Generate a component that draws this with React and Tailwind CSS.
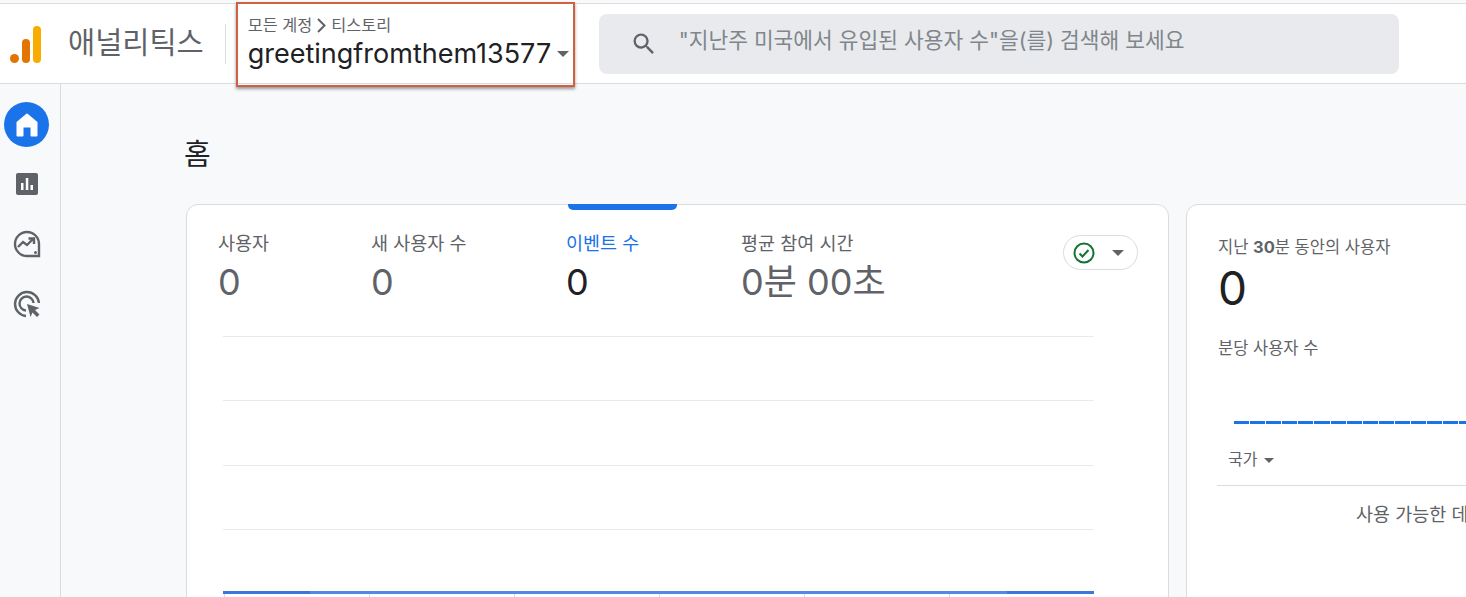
const kr = 'font-["Inter","Noto_Sans_CJK_KR",sans-serif]';

function Caret({ className = '', w = 10 }) {
  return (
    <svg width={w} height={w / 2} viewBox="0 0 10 5" className={className}>
      <path d="M0 0h10L5 5z" fill="#5f6368" />
    </svg>
  );
}

function Header() {
  return (
    <header className="h-[81px] shrink-0 flex items-center bg-white border-t border-b border-[#dadce0] mt-[3px] relative">
      <svg width="31" height="37" viewBox="0 0 31 37" className="ml-[10px] mt-[1px] shrink-0">
        <rect x="23" y="0" width="8" height="37" rx="4" fill="#f9ab00" />
        <rect x="12" y="13" width="8" height="24" rx="4" fill="#e37400" />
        <circle cx="4.500" cy="32.500" r="4.500" fill="#e37400" />
      </svg>
      <span className="ml-[27px] -mt-[2px] text-[29.500px] text-[#5f6368] leading-none">애널리틱스</span>
      <div className="ml-[21px] w-px h-[40px] bg-[#dadce0]" />
      <div className="ml-[22px] w-[330px] flex flex-col -mt-[1px]">
        <div className="flex items-center text-[16.300px] leading-[20px] text-[#5f6368] whitespace-nowrap">
          모든 계정
          <svg width="9" height="15" viewBox="0 0 9 15" className="mx-[5px] mt-[2px]">
            <path d="M1 1l6.500 6.500L1 14" fill="none" stroke="#5f6368" strokeWidth="2" />
          </svg>
          티스토리
        </div>
        <div className="flex items-center mt-[1px]">
          <span className="text-[27px] leading-[36px] text-[#202124]">greetingfromthem13577</span>
          <Caret className="ml-[6px] mt-[1px]" w={12} />
        </div>
      </div>
      <div className="absolute left-[236px] top-[-2px] w-[339px] h-[85px] border-2 border-[#d0603f] shadow-[0_2px_3px_rgba(0,0,0,0.4)] pointer-events-none" />
      <div className="ml-[21px] w-[800px] h-[60px] rounded-[8px] bg-[#e8eaed] flex items-center pl-[31px]">
        <svg width="28" height="28" viewBox="0 0 24 24" className="shrink-0">
          <path d="M15.5 14h-.79l-.28-.27A6.47 6.47 0 0 0 16 9.5 6.5 6.5 0 1 0 9.5 16c1.61 0 3.09-.59 4.23-1.57l.27.28v.79l5 4.99L20.49 19l-4.99-5zm-6 0C7.01 14 5 11.99 5 9.5S7.01 5 9.5 5 14 7.01 14 9.5 11.99 14 9.5 14z" fill="#5f6368" />
        </svg>
        <span className="ml-[21px] -mt-[6px] text-[21.450px] text-[#80868b] whitespace-nowrap">"지난주 미국에서 유입된 사용자 수"을(를) 검색해 보세요</span>
      </div>
    </header>
  );
}

function Sidebar() {
  return (
    <nav className="w-[61px] shrink-0 border-r border-[#dadce0] flex flex-col items-center pt-[18px]">
      <div className="ml-[-7px] w-[45px] h-[45px] rounded-full bg-[#1a73e8] flex items-center justify-center">
        <svg width="22" height="24" viewBox="0 0 22 24">
          <path d="M11 1.500 20.500 9.500V22.500H15.500V13.500H6.500V22.500H1.500V9.500Z" fill="#fff" stroke="#fff" strokeWidth="2" strokeLinejoin="round" />
        </svg>
      </div>
      <svg width="24" height="24" viewBox="0 0 24 24" className="ml-[-7px] mt-[25px]">
        <rect x="1" y="1" width="22" height="22" rx="2" fill="#5f6368" />
        <path d="M6 11h2.500v7H6zM10.800 6h2.500v12h-2.500zM15.500 13H18v5h-2.500z" fill="#fff" />
      </svg>
      <svg width="28" height="28" viewBox="0 0 28 28" className="ml-[-7px] mt-[34px]">
        <path d="M26 14A12 12 0 1 0 14 26h12z" fill="none" stroke="#5f6368" strokeWidth="2.400" />
        <path d="M5 17l5-5 4 3 6-6M15.500 8.500h5.500v5.500" fill="none" stroke="#5f6368" strokeWidth="2.400" />
        <circle cx="22.500" cy="22.500" r="1.500" fill="#5f6368" />
      </svg>
      <svg width="28" height="28" viewBox="0 0 28 28" className="ml-[-7px] mt-[32px]">
        <path d="M13 26A12 12 0 1 1 26 13" fill="none" stroke="#5f6368" strokeWidth="2.400" />
        <path d="M13 20.500A7 7 0 1 1 20.500 13" fill="none" stroke="#5f6368" strokeWidth="2.400" />
        <path d="M14 14l12.500 4-4.500 2 4.500 4.500-2.500 2.500-4.500-4.500-2 4.500z" fill="#5f6368" />
      </svg>
    </nav>
  );
}

function Metric({ label, value, className, labelColor = 'text-[#5f6368]', valueColor = 'text-[#5f6368]' }) {
  return (
    <div className={className}>
      <div className={`text-[18.500px] leading-[24px] whitespace-nowrap ${labelColor}`}>{label}</div>
      <div className={`text-[36px] leading-[44px] mt-[5px] whitespace-nowrap ${valueColor}`}>{value}</div>
    </div>
  );
}

function MainCard() {
  return (
    <section className="w-[983px] h-[500px] shrink-0 bg-white border border-[#dadce0] rounded-t-[12px] relative">
      <div className="absolute left-[381px] top-[-1px] w-[109px] h-[6px] bg-[#1a73e8] rounded-b-[5px]" />
      <div className="flex pl-[31px] pt-[26px]">
        <Metric className="w-[153px]" label="사용자" value="0" />
        <Metric className="w-[195px]" label="새 사용자 수" value="0" />
        <Metric className="w-[175px]" label="이벤트 수" value="0" labelColor="text-[#1a73e8]" valueColor="text-[#202124]" />
        <Metric className="w-[322px]" label="평균 참여 시간" value="0분 00초" />
        <div className="w-[75px] h-[35px] mt-[4px] rounded-full border border-[#dadce0] flex items-center pl-[9px]">
          <svg width="22" height="22" viewBox="0 0 22 22">
            <circle cx="11" cy="11" r="9.500" fill="none" stroke="#137333" strokeWidth="2" />
            <path d="M6.500 11.500l3 3 6-6.500" fill="none" stroke="#137333" strokeWidth="2" />
          </svg>
          <Caret className="ml-[17px]" w={12} />
        </div>
      </div>
      <div className="ml-[36px] w-[871px] mt-[32px]">
        <div className="h-[64px] border-t border-[#e8eaed]" />
        <div className="h-[65px] border-t border-[#e8eaed]" />
        <div className="h-[64px] border-t border-[#e8eaed]" />
        <div className="h-[62px] border-t border-[#e8eaed]" />
        <div className="flex h-[3px] bg-[#5089e6]">
          <div className="w-[87px] bg-[#3c78dc]" />
          <div className="flex-1" />
          <div className="w-[87px] bg-[#3c78dc]" />
        </div>
        <div className="flex h-[3px] pl-[1px]">
          {[0, 1, 2, 3, 4, 5].map(i => (
            <div key={i} className="w-[145.300px] border-l border-[#dadce0]" />
          ))}
        </div>
      </div>
    </section>
  );
}

function RealtimeCard() {
  return (
    <section className="w-[400px] h-[500px] shrink-0 bg-white border border-[#dadce0] rounded-t-[12px] pl-[31px] pt-[32px]">
      <div className="text-[16.500px] leading-[20px] text-[#5f6368] whitespace-nowrap">지난 <span className="font-bold">30</span>분 동안의 사용자</div>
      <div className="text-[46px] leading-[48px] mt-[7px] text-[#202124]">0</div>
      <div className="text-[16.500px] leading-[20px] mt-[26px] text-[#5f6368]">분당 사용자 수</div>
      <div className="ml-[16px] mt-[63px] h-[3px] w-[300px] bg-[repeating-linear-gradient(90deg,#1a73e8_0,#1a73e8_15px,transparent_15px,transparent_16.100px)]" />
      <div className="h-[62px] w-[400px] -ml-[1px] border-b border-[#dadce0] flex items-center pl-[11px] pt-[9px] text-[16px] text-[#5f6368]">
        국가 <Caret className="ml-[7px] mt-[2px]" />
      </div>
      <div className="ml-[138px] mt-[16px] text-[18.500px] leading-[24px] text-[#5f6368] whitespace-nowrap">사용 가능한 데이터가 없습니다</div>
    </section>
  );
}

export default function App() {
  return (
    <div className={`w-[1466px] h-[597px] overflow-hidden flex flex-col bg-[#f8f9fa] ${kr}`}>
      <Header />
      <div className="flex flex-1 min-h-0">
        <Sidebar />
        <main className="flex-1 min-w-0 pl-[123px]">
          <h1 className="text-[29px] leading-[40px] pt-[51px] h-[120px] font-normal text-[#202124]">홈</h1>
          <div className="flex gap-[17px] ml-[2px]">
            <MainCard />
            <RealtimeCard />
          </div>
        </main>
      </div>
    </div>
  );
}
